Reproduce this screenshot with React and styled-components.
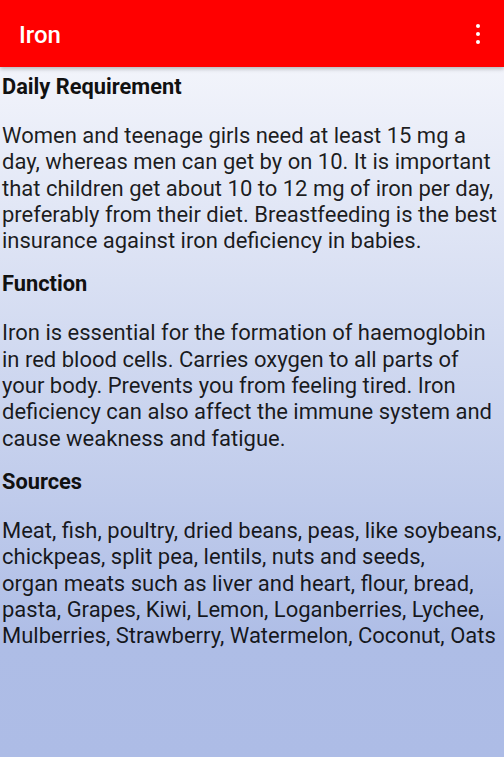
import React from "react";
import styled, { createGlobalStyle } from "styled-components";

const sections = [
  {
    title: "Daily Requirement",
    text: "Women and teenage girls need at least 15 mg a day, whereas men can get by on 10. It is important that children get about 10 to 12 mg of iron per day, preferably from their diet. Breastfeeding is the best insurance against iron deficiency in babies.",
  },
  {
    title: "Function",
    text: "Iron is essential for the formation of haemoglobin in red blood cells. Carries oxygen to all parts of your body. Prevents you from feeling tired. Iron deficiency can also affect the immune system and cause weakness and fatigue.",
  },
  {
    title: "Sources",
    text: "Meat, fish, poultry, dried beans, peas, like soybeans, chickpeas, split pea, lentils, nuts and seeds,\norgan meats such as liver and heart, flour, bread, pasta, Grapes, Kiwi, Lemon, Loganberries, Lychee, Mulberries, Strawberry, Watermelon, Coconut, Oats",
  },
];

function App() {
  return (
    <>
      <GlobalStyle />
      <Screen>
        <AppBar>
          <Title>Iron</Title>
          <MenuButton aria-label="More options">
            <Dot />
            <Dot />
            <Dot />
          </MenuButton>
        </AppBar>
        <Content>
          {sections.map((s) => (
            <Section key={s.title}>
              <Heading>{s.title}</Heading>
              <Body>{s.text}</Body>
            </Section>
          ))}
        </Content>
      </Screen>
    </>
  );
}

export default App;

const GlobalStyle = createGlobalStyle`
  html, body {
    margin: 0;
    padding: 0;
  }
  body {
    font-family: Roboto, "Noto Sans", "Liberation Sans", sans-serif;
  }
`;

const Screen = styled.div`
  width: 504px;
  height: 757px;
  overflow: hidden;
  display: flex;
  flex-direction: column;
  background: linear-gradient(180deg, #f2f4fb 9%, #c9d3ee 55%, #aebde6 85%, #adbce6 100%);
`;

const AppBar = styled.header`
  height: 67px;
  flex-shrink: 0;
  background: #ff0000;
  display: flex;
  align-items: center;
  justify-content: space-between;
  padding: 0 14px 0 19px;
  box-shadow: 0 2px 4px rgba(0, 0, 0, 0.25);
  position: relative;
  z-index: 1;
`;

const Title = styled.h1`
  margin: 2px 0 0;
  color: #fff;
  font-size: 24px;
  font-weight: 500;
`;

const MenuButton = styled.div`
  width: 24px;
  height: 40px;
  display: flex;
  flex-direction: column;
  align-items: center;
  justify-content: center;
  gap: 3.5px;
  margin-top: 1px;
`;

const Dot = styled.span`
  width: 4.5px;
  height: 4.5px;
  border-radius: 50%;
  background: #fff;
`;

const Content = styled.main`
  padding: 7px 0 0 2px;
`;

const Section = styled.section`
  & + & {
    margin-top: 17px;
  }
`;

const Heading = styled.h2`
  margin: 0 0 23px;
  font-size: 21.8px;
  line-height: 26px;
  font-weight: 700;
  color: #111;
`;

const Body = styled.p`
  margin: 0;
  font-size: 22px;
  line-height: 26.3px;
  color: rgba(0, 0, 0, 0.88);
  white-space: pre-line;
`;
